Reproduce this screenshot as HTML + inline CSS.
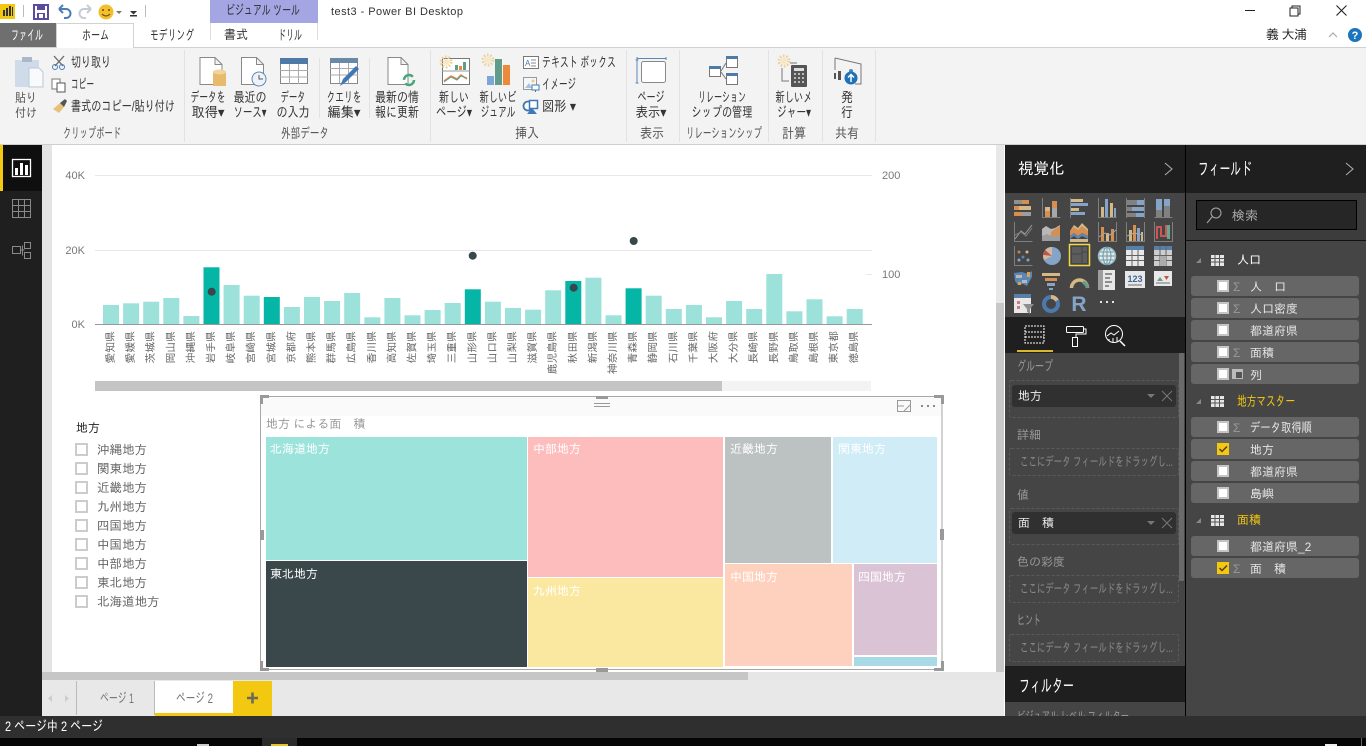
<!DOCTYPE html>
<html><head><meta charset="utf-8"><title>test3 - Power BI Desktop</title>
<style>
html,body{margin:0;padding:0;width:1366px;height:746px;overflow:hidden;background:#fff}
svg{display:block}
text{font-family:"Liberation Sans","IPAGothic","Noto Sans CJK JP",sans-serif;font-size:12px;fill:#444}
.c{text-anchor:middle}
.r{fill:#333;font-size:12.5px}
.g{fill:#555;font-size:12.5px}
.w{fill:#fff}
.lb{font-size:10.800px;fill:#666;text-anchor:end}
.ax{font-size:11px;fill:#777}
.sl{font-size:12.500px;fill:#666}
.f{font-size:12px;fill:#e6e6e6}
.h{font-size:12.500px;fill:#f2c811}
.wl{font-size:12px;fill:#999}
.dr{font-size:13px;fill:#8a8a8a}
.tm{font-size:12px;fill:#fff}
.k{font-size:14px}
</style></head><body>
<svg width="1366" height="746" viewBox="0 0 1366 746" xmlns="http://www.w3.org/2000/svg">
<!-- base -->
<rect width="1366" height="746" fill="#fff"/>
<!-- ribbon -->
<rect x="0" y="47" width="1366" height="97" fill="#f3f3f3"/>
<rect x="0" y="47" width="1366" height="1" fill="#d2d2d2"/>
<rect x="0" y="144" width="1366" height="1" fill="#cfcfcf"/>
<!-- title bar -->
<rect x="0" y="4" width="15" height="15" fill="#f2c811"/>
<rect x="3" y="10" width="2" height="6" fill="#333"/><rect x="6" y="8" width="2" height="8" fill="#333"/><rect x="9" y="6" width="2" height="10" fill="#333"/><rect x="12" y="7" width="1" height="9" fill="#333"/>
<rect x="23" y="5" width="1" height="12" fill="#bbb"/>
<rect x="34" y="5" width="14" height="14" fill="none" stroke="#5c4a9e" stroke-width="2"/><rect x="37" y="5" width="8" height="5" fill="#5c4a9e"/><rect x="37" y="13" width="8" height="6" fill="#5c4a9e"/><rect x="39" y="14" width="4" height="4" fill="#fff"/>
<path d="M59 9l4-4M59 9l4 4M59 9h7a4.500 4.500 0 0 1 0 9h-2" fill="none" stroke="#4a7db8" stroke-width="2"/>
<path d="M91 9l-4-4M91 9l-4 4M91 9h-7a4.500 4.500 0 0 0 0 9h2" fill="none" stroke="#c4ccd6" stroke-width="2"/>
<circle cx="106" cy="12" r="7.500" fill="#f2c02a"/><circle cx="103" cy="10" r="1" fill="#6b4a10"/><circle cx="109" cy="10" r="1" fill="#6b4a10"/><path d="M102 14q4 4 8 0" fill="none" stroke="#6b4a10"/>
<path d="M116 11h6l-3 3z" fill="#777"/>
<path d="M130 11h7l-3.500 3.500z M130 15h7v1.500h-7z" fill="#333"/>
<rect x="145" y="5" width="1" height="12" fill="#bbb"/>
<rect x="210" y="0" width="108" height="23" fill="#a3a6e2"/>
<rect x="210" y="23" width="1" height="17" fill="#ddd"/><rect x="317" y="23" width="1" height="17" fill="#ddd"/>
<text x="226" y="15" textLength="74" lengthAdjust="spacingAndGlyphs" class="k" style="fill:#333">ビジュアル ツール</text>
<text x="331" y="15" textLength="132" lengthAdjust="spacing" style="fill:#333;font-size:11px">test3 - Power BI Desktop</text>
<!-- window controls -->
<rect x="1245" y="10" width="10" height="1" fill="#222"/>
<rect x="1290" y="8" width="8" height="8" fill="none" stroke="#222"/><path d="M1292 8V6h8v8h-2" fill="none" stroke="#222"/>
<path d="M1336.500 5.500l10 10M1346.500 5.500l-10 10" stroke="#222" stroke-width="1.100"/>
<text x="1266" y="39" textLength="41" lengthAdjust="spacing" style="fill:#222;font-size:13px">義 大浦</text>
<path d="M1329 37l4-4 4 4" fill="none" stroke="#aaa" stroke-width="1.200"/>
<circle cx="1355" cy="35" r="7" fill="#1c75bc"/><text x="1355" y="39" class="c w" style="font-size:11px;font-weight:bold">?</text>
<!-- tabs -->
<rect x="0" y="23" width="56" height="24" fill="#6f6f6f"/>
<text x="11" y="40" textLength="32" lengthAdjust="spacingAndGlyphs" class="w k">ファイル</text>
<rect x="57" y="23" width="76" height="25" fill="#fff"/><path d="M56.500 48V23.500H133.500V48" fill="none" stroke="#d2d2d2"/>
<text x="82" y="40" textLength="27" lengthAdjust="spacingAndGlyphs" class="k" style="fill:#333">ホーム</text>
<text x="150" y="40" textLength="44" lengthAdjust="spacingAndGlyphs" class="k" style="fill:#333">モデリング</text>
<text x="224" y="39" textLength="24" lengthAdjust="spacingAndGlyphs" style="fill:#333;font-size:13px">書式</text>
<text x="278" y="40" textLength="24" lengthAdjust="spacingAndGlyphs" class="k" style="fill:#333">ドリル</text>
<!-- ribbon separators -->
<g fill="#e2e2e2"><rect x="184" y="50" width="1" height="92"/><rect x="430" y="50" width="1" height="92"/><rect x="626" y="50" width="1" height="92"/><rect x="679" y="50" width="1" height="92"/><rect x="768" y="50" width="1" height="92"/><rect x="822" y="50" width="1" height="92"/><rect x="875" y="50" width="1" height="92"/><rect x="319" y="58" width="1" height="60"/><rect x="369" y="58" width="1" height="60"/></g>
<!-- ribbon: clipboard -->
<rect x="15" y="60" width="24" height="27" fill="#cfdbe9"/><rect x="22" y="57" width="10" height="5" fill="#aab8c8"/><path d="M29 68h10l4 4v15H29z" fill="#f8fafc" stroke="#b9c8da"/>
<text x="26" y="102" class="c g" textLength="22" lengthAdjust="spacingAndGlyphs">貼り</text><text x="26" y="117" class="c g" textLength="22" lengthAdjust="spacingAndGlyphs">付け</text>
<path d="M54 56l9 10M64 56l-9 10" stroke="#666" stroke-width="1.300"/><circle cx="55" cy="67" r="2.500" fill="none" stroke="#4a7db8"/><circle cx="62" cy="67" r="2.500" fill="none" stroke="#4a7db8"/>
<text x="71" y="67" textLength="40" lengthAdjust="spacingAndGlyphs" class="r k">切り取り</text>
<rect x="52" y="79" width="8" height="10" fill="#fff" stroke="#777"/><rect x="57" y="83" width="8" height="9" fill="#fff" stroke="#555"/>
<text x="71" y="89" textLength="23" lengthAdjust="spacingAndGlyphs" class="r k">コピー</text>
<path d="M53 109l7-6 4 4-5 6z" fill="#e6c17a"/><path d="M60 103l5-4 2 2-3 6z" fill="#555"/>
<text x="71" y="111" textLength="104" lengthAdjust="spacingAndGlyphs" class="r k">書式のコピー/貼り付け</text>
<text x="92" y="138" class="c g k" textLength="58" lengthAdjust="spacingAndGlyphs">クリップボード</text>
<!-- data -->
<path d="M200 57.500h15l7 7v20h-22z M215 57.500v7h7" fill="#fff" stroke="#888"/>
<rect x="213" y="72" width="13" height="14" fill="#e6bb6e"/><ellipse cx="219.500" cy="72" rx="6.500" ry="2.500" fill="#f1d49a"/>
<text x="208" y="102" class="c r k" textLength="35" lengthAdjust="spacingAndGlyphs">データを</text><text x="208" y="117" class="c r k" textLength="33" lengthAdjust="spacingAndGlyphs">取得▾</text>
<path d="M241.500 57.500h15l7 7v20h-22z M256.500 57.500v7h7" fill="#fff" stroke="#888"/>
<circle cx="259" cy="79" r="7" fill="#eef3f9" stroke="#5b87b5"/><path d="M259 75v4h4" fill="none" stroke="#555"/>
<text x="250" y="102" class="c r k" textLength="33" lengthAdjust="spacingAndGlyphs">最近の</text><text x="250" y="117" class="c r k" textLength="33" lengthAdjust="spacingAndGlyphs">ソース▾</text>
<rect x="280.500" y="58.500" width="27" height="25" fill="#fff" stroke="#888"/><rect x="280" y="58" width="28" height="6" fill="#4f7aa8"/><path d="M280 70.500h28M280 77h28M289.500 64v20M298.500 64v20" stroke="#aaa"/>
<text x="293" y="102" class="c r k" textLength="25" lengthAdjust="spacingAndGlyphs">データ</text><text x="293" y="117" class="c r k" textLength="33" lengthAdjust="spacingAndGlyphs">の入力</text>
<rect x="330.500" y="58.500" width="27" height="25" fill="#fff" stroke="#888"/><rect x="330" y="58" width="28" height="5" fill="#6a88a8"/><path d="M330 68.500h28M330 75h28M339.500 63v20M348.500 63v20" stroke="#aaa"/>
<path d="M340 86l3-7 13-13 3 3-13 13z" fill="#3f78b5"/>
<text x="344" y="102" class="c r k" textLength="35" lengthAdjust="spacingAndGlyphs">クエリを</text><text x="344" y="117" class="c r k" textLength="33" lengthAdjust="spacingAndGlyphs">編集▾</text>
<path d="M388 57.500h13l7 7v20h-20z M401 57.500v7h7" fill="#fff" stroke="#888"/>
<circle cx="409" cy="80" r="5" fill="none" stroke="#4aa77b" stroke-width="2.500" stroke-dasharray="12 3.700"/>
<text x="397" y="102" class="c r k" textLength="44" lengthAdjust="spacingAndGlyphs">最新の情</text><text x="397" y="117" class="c r k" textLength="44" lengthAdjust="spacingAndGlyphs">報に更新</text>
<text x="305" y="138" class="c g k" textLength="48" lengthAdjust="spacingAndGlyphs">外部データ</text>
<!-- insert -->
<rect x="442.500" y="58.500" width="27" height="26" fill="#fff" stroke="#777"/><path d="M442 71h28" stroke="#999"/>
<circle cx="446" cy="62" r="3" fill="#f6e7c6"/><circle cx="446" cy="62" r="5" fill="none" stroke="#eed39a" stroke-width="3" stroke-dasharray="1.600 1.600"/><rect x="455" y="65" width="3" height="5" fill="#5f9d8a"/><rect x="459" y="66" width="3" height="4" fill="#e8894a"/><rect x="463" y="62" width="3" height="8" fill="#5f9d8a"/>
<path d="M444 81l7-5 6 3 4-4 6 4" fill="none" stroke="#e8894a" stroke-width="1.600"/><path d="M444 82l7-5 6 3 4-4 6 2" fill="none" stroke="#5f9d8a" stroke-width="1"/>
<text x="454" y="102" class="c r k" textLength="30" lengthAdjust="spacingAndGlyphs">新しい</text><text x="454" y="117" class="c r k" textLength="36" lengthAdjust="spacingAndGlyphs">ページ▾</text>
<circle cx="488" cy="60" r="3" fill="#f6e7c6"/><circle cx="488" cy="60" r="5" fill="none" stroke="#eed39a" stroke-width="3" stroke-dasharray="1.600 1.600"/><rect x="487" y="76" width="7" height="9" fill="#7aa6d8"/><rect x="495" y="59" width="7" height="26" fill="#5f9d8a"/><rect x="503" y="65" width="7" height="20" fill="#ec8a3c"/>
<text x="498" y="102" class="c r k" textLength="37" lengthAdjust="spacingAndGlyphs">新しいビ</text><text x="498" y="117" class="c r k" textLength="35" lengthAdjust="spacingAndGlyphs">ジュアル</text>
<rect x="523.500" y="56.500" width="15" height="12" fill="#fff" stroke="#777"/><text x="525" y="66" style="font-size:8px;fill:#3f78b5">A</text><path d="M531 60h5M531 63h5M531 66h5" stroke="#888"/>
<text x="542" y="67" textLength="74" lengthAdjust="spacingAndGlyphs" class="r k">テキスト ボックス</text>
<rect x="523.500" y="77.500" width="13" height="12" fill="#f4f7fa" stroke="#999"/><path d="M525 88l4-5 3 5z" fill="#a8c2dc"/><circle cx="533" cy="81" r="1.500" fill="#eecb8a"/><rect x="532" y="85" width="7" height="5" fill="#fff" stroke="#3f78b5"/><path d="M535.500 90v2" stroke="#3f78b5"/>
<text x="542" y="89" textLength="34" lengthAdjust="spacingAndGlyphs" class="r k">イメージ</text>
<circle cx="528" cy="106" r="4.500" fill="#fff" stroke="#3f78b5" stroke-width="1.800"/><rect x="529.500" y="100.500" width="8" height="8" fill="#fff" stroke="#3f78b5" stroke-width="1.500"/><path d="M527 114l5-6 5 6z" fill="#3f78b5"/>
<text x="542" y="111" class="r k" textLength="34" lengthAdjust="spacingAndGlyphs">図形 ▾</text>
<text x="527" y="138" class="c g k" textLength="24" lengthAdjust="spacingAndGlyphs">挿入</text>
<!-- view -->
<path d="M637 58.500h29M637 57v3M666 57v3M637 60v23M635.500 60h3M635.500 83h3" fill="none" stroke="#5b87b5"/><rect x="641.500" y="61.500" width="24" height="21" rx="2" fill="#fff" stroke="#888"/>
<text x="651" y="102" class="c r k" textLength="27" lengthAdjust="spacingAndGlyphs">ページ</text><text x="651" y="117" class="c r k" textLength="31" lengthAdjust="spacingAndGlyphs">表示▾</text>
<text x="652" y="138" class="c g k" textLength="24" lengthAdjust="spacingAndGlyphs">表示</text>
<!-- relationships -->
<g fill="#fff" stroke="#777"><rect x="709.500" y="66.500" width="11" height="10"/><rect x="726.500" y="56.500" width="11" height="11"/><rect x="726.500" y="74.500" width="11" height="10"/></g>
<rect x="709" y="66" width="12" height="3" fill="#4f7aa8"/><rect x="726" y="56" width="12" height="3" fill="#4f7aa8"/><rect x="726" y="73" width="12" height="3" fill="#4f7aa8"/>
<path d="M721 71l5-8M721 72l5 7" stroke="#777" fill="none"/>
<text x="722" y="102" class="c r k" textLength="48" lengthAdjust="spacingAndGlyphs">リレーション</text><text x="722" y="117" class="c r k" textLength="61" lengthAdjust="spacingAndGlyphs">シップの管理</text>
<text x="724" y="138" class="c g k" textLength="76" lengthAdjust="spacingAndGlyphs">リレーションシップ</text>
<!-- measure -->
<circle cx="784" cy="61" r="3" fill="#f6e7c6"/><circle cx="784" cy="61" r="5" fill="none" stroke="#eed39a" stroke-width="3" stroke-dasharray="1.600 1.600"/><path d="M782 68v13h7M790 63h7" fill="none" stroke="#777"/>
<rect x="791" y="65" width="16" height="22" rx="1" fill="#555"/><rect x="794" y="68" width="10" height="3" fill="#ddd"/><path d="M794 74h10M794 78h10M794 82h10" stroke="#bbb" stroke-width="2" stroke-dasharray="2 2"/>
<text x="794" y="102" class="c r k" textLength="37" lengthAdjust="spacingAndGlyphs">新しいメ</text><text x="794" y="117" class="c r k" textLength="34" lengthAdjust="spacingAndGlyphs">ジャー▾</text>
<text x="794" y="138" class="c g k" textLength="24" lengthAdjust="spacingAndGlyphs">計算</text>
<!-- publish -->
<path d="M835 58l26 6v20h-6" fill="none" stroke="#777"/><path d="M835 58v12" stroke="#777"/>
<rect x="834" y="73" width="2" height="6" fill="#555"/><rect x="838" y="71" width="3" height="9" fill="#555"/>
<circle cx="851" cy="71" r="2" fill="#4f87bd"/><circle cx="851" cy="78" r="6.500" fill="#1f72b8"/><path d="M851 82v-7M848 77.500l3-3 3 3" fill="none" stroke="#fff" stroke-width="1.500"/>
<text x="847" y="102" class="c r k" textLength="12" lengthAdjust="spacingAndGlyphs">発</text><text x="847" y="117" class="c r k" textLength="12" lengthAdjust="spacingAndGlyphs">行</text>
<text x="847" y="138" class="c g k" textLength="24" lengthAdjust="spacingAndGlyphs">共有</text>

<!-- left nav -->
<rect x="0" y="145" width="42" height="571" fill="#1f1f1f"/>
<rect x="0" y="145" width="3" height="46" fill="#f2c811"/><rect x="3" y="145" width="39" height="46" fill="#0f0f0f"/>
<rect x="12.500" y="159.500" width="18" height="17" fill="none" stroke="#fff" stroke-width="1.300"/><rect x="15" y="168" width="3" height="7" fill="#fff"/><rect x="20" y="163" width="3" height="12" fill="#fff"/><rect x="25" y="165" width="3" height="10" fill="#fff"/>
<g stroke="#8a8a8a" fill="none"><rect x="12.500" y="199.500" width="18" height="18"/><path d="M12 205.500h19M12 211.500h19M18.500 199v19M24.500 199v19"/>
<rect x="12.500" y="246.500" width="8" height="7"/><rect x="24.500" y="242.500" width="6" height="6"/><rect x="24.500" y="252.500" width="6" height="6"/><path d="M20.500 250h4M22.500 245.500v10"/></g>
<!-- canvas -->
<rect x="42" y="145" width="10" height="527" fill="#e4e4e4"/>
<rect x="996" y="145" width="8" height="158" fill="#e8e8e8"/><rect x="996" y="303" width="8" height="369" fill="#c8c8c8"/>
<rect x="42" y="672" width="962" height="8" fill="#e6e6e6"/><rect x="42" y="672" width="706" height="8" fill="#c6c6c6"/>

<!-- chart -->
<g fill="#e8e8e8"><rect x="95" y="175" width="777" height="1"/><rect x="95" y="250" width="777" height="1"/><rect x="866" y="274" width="6" height="1"/></g>
<text x="85" y="179" class="ax" text-anchor="end">40K</text><text x="85" y="254" class="ax" text-anchor="end">20K</text><text x="85" y="328" class="ax" text-anchor="end">0K</text>
<text x="882" y="179" class="ax">200</text><text x="882" y="278" class="ax">100</text>
<g fill="#9ce1da">
<rect x="103" y="305" width="16" height="19.300"/><rect x="123.100" y="303.300" width="16" height="21"/><rect x="143.200" y="301.700" width="16" height="22.600"/><rect x="163.300" y="298" width="16" height="26.300"/><rect x="183.400" y="316" width="16" height="8.300"/>
<rect x="203.500" y="267.300" width="16" height="57" fill="#05b5a6"/><rect x="223.600" y="285" width="16" height="39.300"/><rect x="243.700" y="295.700" width="16" height="28.600"/><rect x="263.800" y="297" width="16" height="27.300" fill="#05b5a6"/><rect x="283.900" y="307" width="16" height="17.300"/>
<rect x="304" y="297" width="16" height="27.300"/><rect x="324.100" y="301" width="16" height="23.300"/><rect x="344.200" y="293" width="16" height="31.300"/><rect x="364.300" y="317.300" width="16" height="7"/><rect x="384.400" y="298" width="16" height="26.300"/>
<rect x="404.500" y="315.300" width="16" height="9"/><rect x="424.600" y="310" width="16" height="14.300"/><rect x="444.700" y="303" width="16" height="21.300"/><rect x="464.800" y="289.300" width="16" height="35" fill="#05b5a6"/><rect x="484.900" y="301.700" width="16" height="22.600"/>
<rect x="505" y="308" width="16" height="16.300"/><rect x="525.100" y="309.700" width="16" height="14.600"/><rect x="545.200" y="290.300" width="16" height="34"/><rect x="565.300" y="281" width="16" height="43.300" fill="#05b5a6"/><rect x="585.400" y="277.700" width="16" height="46.600"/>
<rect x="605.500" y="315.300" width="16" height="9"/><rect x="625.600" y="288.300" width="16" height="36" fill="#05b5a6"/><rect x="645.700" y="295.700" width="16" height="28.600"/><rect x="665.800" y="309" width="16" height="15.300"/><rect x="685.900" y="305" width="16" height="19.300"/>
<rect x="706" y="317.300" width="16" height="7"/><rect x="726.100" y="301" width="16" height="23.300"/><rect x="746.200" y="309" width="16" height="15.300"/><rect x="766.300" y="274" width="16" height="50.300"/><rect x="786.400" y="311.300" width="16" height="13"/>
<rect x="806.500" y="299.300" width="16" height="25"/><rect x="826.600" y="316.300" width="16" height="8"/><rect x="846.700" y="309" width="16" height="15.300"/>
</g>
<rect x="95" y="324" width="777" height="1" fill="#999"/>
<g fill="#37474b"><circle cx="211.700" cy="291.700" r="4"/><circle cx="472.700" cy="255.700" r="4"/><circle cx="573.700" cy="287.700" r="4"/><circle cx="633.700" cy="241" r="4"/></g>
<g>
<text class="lb" transform="translate(114,331) rotate(-90)">愛知県</text>
<text class="lb" transform="translate(134.100,331) rotate(-90)">愛媛県</text>
<text class="lb" transform="translate(154.200,331) rotate(-90)">茨城県</text>
<text class="lb" transform="translate(174.300,331) rotate(-90)">岡山県</text>
<text class="lb" transform="translate(194.400,331) rotate(-90)">沖縄県</text>
<text class="lb" transform="translate(214.500,331) rotate(-90)">岩手県</text>
<text class="lb" transform="translate(234.600,331) rotate(-90)">岐阜県</text>
<text class="lb" transform="translate(254.700,331) rotate(-90)">宮崎県</text>
<text class="lb" transform="translate(274.800,331) rotate(-90)">宮城県</text>
<text class="lb" transform="translate(294.900,331) rotate(-90)">京都府</text>
<text class="lb" transform="translate(315,331) rotate(-90)">熊本県</text>
<text class="lb" transform="translate(335.100,331) rotate(-90)">群馬県</text>
<text class="lb" transform="translate(355.200,331) rotate(-90)">広島県</text>
<text class="lb" transform="translate(375.300,331) rotate(-90)">香川県</text>
<text class="lb" transform="translate(395.400,331) rotate(-90)">高知県</text>
<text class="lb" transform="translate(415.500,331) rotate(-90)">佐賀県</text>
<text class="lb" transform="translate(435.600,331) rotate(-90)">埼玉県</text>
<text class="lb" transform="translate(455.700,331) rotate(-90)">三重県</text>
<text class="lb" transform="translate(475.800,331) rotate(-90)">山形県</text>
<text class="lb" transform="translate(495.900,331) rotate(-90)">山口県</text>
<text class="lb" transform="translate(516,331) rotate(-90)">山梨県</text>
<text class="lb" transform="translate(536.100,331) rotate(-90)">滋賀県</text>
<text class="lb" transform="translate(556.200,331) rotate(-90)">鹿児島県</text>
<text class="lb" transform="translate(576.300,331) rotate(-90)">秋田県</text>
<text class="lb" transform="translate(596.400,331) rotate(-90)">新潟県</text>
<text class="lb" transform="translate(616.500,331) rotate(-90)">神奈川県</text>
<text class="lb" transform="translate(636.600,331) rotate(-90)">青森県</text>
<text class="lb" transform="translate(656.700,331) rotate(-90)">静岡県</text>
<text class="lb" transform="translate(676.800,331) rotate(-90)">石川県</text>
<text class="lb" transform="translate(696.900,331) rotate(-90)">千葉県</text>
<text class="lb" transform="translate(717,331) rotate(-90)">大阪府</text>
<text class="lb" transform="translate(737.100,331) rotate(-90)">大分県</text>
<text class="lb" transform="translate(757.200,331) rotate(-90)">長崎県</text>
<text class="lb" transform="translate(777.300,331) rotate(-90)">長野県</text>
<text class="lb" transform="translate(797.400,331) rotate(-90)">鳥取県</text>
<text class="lb" transform="translate(817.500,331) rotate(-90)">島根県</text>
<text class="lb" transform="translate(837.600,331) rotate(-90)">東京都</text>
<text class="lb" transform="translate(857.700,331) rotate(-90)">徳島県</text>
</g>
<rect x="95" y="381" width="627" height="10" fill="#c4c4c4"/><rect x="722" y="381" width="149" height="10" fill="#f3f3f3"/>

<!-- slicer -->
<text x="76" y="432" style="font-size:12px;fill:#222">地方</text>
<g fill="#fff" stroke="#ccc" stroke-width="2">
<rect x="76" y="444" width="11" height="11"/><rect x="76" y="463" width="11" height="11"/><rect x="76" y="482" width="11" height="11"/><rect x="76" y="501" width="11" height="11"/><rect x="76" y="520" width="11" height="11"/><rect x="76" y="539" width="11" height="11"/><rect x="76" y="558" width="11" height="11"/><rect x="76" y="577" width="11" height="11"/><rect x="76" y="596" width="11" height="11"/>
</g>
<text x="97" y="454" class="sl">沖縄地方</text><text x="97" y="473" class="sl">関東地方</text><text x="97" y="492" class="sl">近畿地方</text><text x="97" y="511" class="sl">九州地方</text><text x="97" y="530" class="sl">四国地方</text><text x="97" y="549" class="sl">中国地方</text><text x="97" y="568" class="sl">中部地方</text><text x="97" y="587" class="sl">東北地方</text><text x="97" y="606" class="sl">北海道地方</text>

<!-- treemap visual -->
<rect x="261" y="397" width="681" height="19" fill="#fafafa"/>
<rect x="260.500" y="396.500" width="681.500" height="273" fill="none" stroke="#a6a6a6"/>
<text x="266" y="428" style="font-size:12px;fill:#999">地方 による面　積</text>
<rect x="266" y="437" width="261" height="123" fill="#9ce3dc"/>
<rect x="266" y="561" width="261" height="106" fill="#3a474b"/>
<rect x="528" y="437" width="195" height="140" fill="#fdbdbd"/>
<rect x="528" y="578" width="195" height="89" fill="#fbe8a0"/>
<rect x="725" y="437" width="106" height="126" fill="#bcc1c1"/>
<rect x="833" y="437" width="104" height="126" fill="#cfecf7"/>
<rect x="725" y="564" width="127" height="102" fill="#fdd1bd"/>
<rect x="854" y="564" width="83" height="91" fill="#dbc3d6"/>
<rect x="854" y="657" width="83" height="9" fill="#a9d9e5"/>
<text x="270" y="453" class="tm">北海道地方</text><text x="270" y="578" class="tm">東北地方</text><text x="533" y="453" class="tm">中部地方</text><text x="533" y="595" class="tm">九州地方</text><text x="730" y="453" class="tm">近畿地方</text><text x="838" y="453" class="tm">関東地方</text><text x="730" y="581" class="tm">中国地方</text><text x="858" y="581" class="tm">四国地方</text>
<!-- handles -->
<g fill="#999"><rect x="596" y="396" width="12" height="3"/><rect x="260" y="530" width="4" height="10"/><rect x="940" y="529" width="4" height="11"/><rect x="596" y="668" width="12" height="4"/>
<path d="M260 395h9v3h-6v6h-3z"/><path d="M934 395h10v9h-3v-6h-7z"/><path d="M260 661h3v7h6v3h-9z"/><path d="M941 661h3v10h-10v-3h7z"/></g>
<path d="M594 403.500h16M594 406.500h16" stroke="#999"/>
<rect x="897.500" y="400.500" width="13" height="11" fill="none" stroke="#999"/><path d="M904 411l6-6M904 406h-6" stroke="#999" fill="none"/>
<g fill="#888"><rect x="921" y="405" width="2" height="2"/><rect x="927" y="405" width="2" height="2"/><rect x="933" y="405" width="2" height="2"/></g>

<!-- page tabs -->
<rect x="42" y="680" width="962" height="36" fill="#e8e8e8"/>
<path d="M52 695l-4 3.500 4 3.500z" fill="#ccc"/><path d="M65 695l4 3.500-4 3.500z" fill="#ccc"/>
<rect x="76" y="681" width="1" height="34" fill="#bbb"/><rect x="154" y="681" width="1" height="34" fill="#bbb"/>
<text x="100" y="703" textLength="34" lengthAdjust="spacingAndGlyphs" class="k" style="fill:#777">ページ 1</text>
<rect x="155" y="681" width="78" height="34" fill="#fff"/><rect x="155" y="713" width="78" height="3" fill="#f2c811"/>
<text x="176" y="703" textLength="37" lengthAdjust="spacingAndGlyphs" class="k" style="fill:#777">ページ 2</text>
<rect x="233" y="681" width="39" height="35" fill="#f2c811"/><path d="M247 698h11M252.500 692.500v11" stroke="#6b6b5a" stroke-width="2.600"/>

<!-- viz pane -->
<rect x="1005" y="145" width="180" height="571" fill="#454545"/>
<rect x="1005" y="145" width="180" height="48" fill="#1f1f1f"/>
<text x="1018" y="174" style="font-size:15.500px;fill:#fff">視覚化</text>
<path d="M1165 163l7 6-7 6" fill="none" stroke="#aaa" stroke-width="1.100"/>
<rect x="1005" y="317" width="180" height="36" fill="#1f1f1f"/>
<g opacity=".88">
<!-- gallery row 1 -->
<g transform="translate(1014,198)"><rect x="0" y="2" width="8" height="4" fill="#9a9a9a"/><rect x="8" y="2" width="7" height="4" fill="#ea9a52"/><rect x="0" y="8" width="5" height="4" fill="#ea9a52"/><rect x="5" y="8" width="12" height="4" fill="#e8c88f"/><rect x="0" y="14" width="8" height="4" fill="#ea9a52"/><rect x="8" y="14" width="9" height="4" fill="#aaa"/></g>
<g transform="translate(1042,198)"><path d="M.5 0v19.500h18" fill="none" stroke="#888"/><rect x="3" y="9" width="5" height="4" fill="#e8c88f"/><rect x="3" y="13" width="5" height="6" fill="#ea9a52"/><rect x="10" y="3" width="5" height="7" fill="#ea9a52"/><rect x="10" y="10" width="5" height="9" fill="#b5b5b5"/></g>
<g transform="translate(1070,198)"><path d="M.5 0v20" stroke="#888"/><rect x="1" y="1" width="12" height="3" fill="#e8c88f"/><rect x="1" y="5" width="17" height="3" fill="#8eb2da"/><rect x="1" y="10" width="8" height="3" fill="#e8c88f"/><rect x="1" y="14" width="14" height="3" fill="#8eb2da"/></g>
<g transform="translate(1098,198)"><path d="M.5 0v19.500h18" fill="none" stroke="#888"/><rect x="3" y="9" width="3" height="10" fill="#e8c88f"/><rect x="7" y="1" width="3" height="18" fill="#8eb2da"/><rect x="12" y="5" width="3" height="14" fill="#e8c88f"/><rect x="16" y="10" width="2" height="9" fill="#8eb2da"/></g>
<g transform="translate(1126,198)"><path d="M.5 0v20M18.500 0v20" stroke="#888"/><rect x="1" y="2" width="10" height="5" fill="#8a8a8a"/><rect x="11" y="2" width="7" height="5" fill="#8eb2da"/><rect x="1" y="9" width="5" height="4" fill="#8a8a8a"/><rect x="6" y="9" width="12" height="4" fill="#8eb2da"/><rect x="1" y="15" width="9" height="4" fill="#8a8a8a"/><rect x="10" y="15" width="8" height="4" fill="#8eb2da"/></g>
<g transform="translate(1154,198)"><path d="M.5 19.500h18" stroke="#888"/><rect x="2" y="1" width="6" height="11" fill="#8eb2da"/><rect x="2" y="12" width="6" height="7" fill="#8a8a8a"/><rect x="10" y="1" width="6" height="7" fill="#8eb2da"/><rect x="10" y="8" width="6" height="11" fill="#8a8a8a"/></g>
<!-- row 2 -->
<g transform="translate(1014,222)"><path d="M.5 0v19.500h18" fill="none" stroke="#888"/><path d="M1 17l6-8 4 3 7-9" fill="none" stroke="#aaa"/><path d="M1 13l6-3 5 4 6-8" fill="none" stroke="#888"/></g>
<g transform="translate(1042,222)"><path d="M0 19V7l4-3 5 3 4-1 5-3v16z" fill="#c8c8c8"/><path d="M9 10l4-3 5-3v10l-9 0z" fill="#ea9a52"/><path d="M0 14l5-2 5 2 8-1v6H0z" fill="#aaa"/></g>
<g transform="translate(1070,222)"><path d="M0 9l4-6 4 3 4-5 6 6v4H0z" fill="#e8c88f"/><path d="M0 9l4-4 4 3 4-4 6 5v5l-6-3-4 3-4-3-4 3z" fill="#ea9a52"/><path d="M0 14l4-3 4 3 4-3 6 3v3l-6-3-4 3-4-3-4 3z" fill="#5f8fc6"/><rect x="0" y="17" width="18" height="3" fill="#e8c88f"/></g>
<g transform="translate(1098,222)"><path d="M.5 0v19.500h18V0" fill="none" stroke="#888"/><rect x="3" y="5" width="3" height="14" fill="#ea9a52"/><rect x="8" y="11" width="3" height="8" fill="#e8c88f"/><rect x="13" y="7" width="3" height="12" fill="#ea9a52"/><path d="M1 15l6-4 5 2 6-5" fill="none" stroke="#b5b5b5"/></g>
<g transform="translate(1126,222)"><path d="M.5 0v19.500h18V0" fill="none" stroke="#888"/><rect x="3" y="8" width="3" height="11" fill="#e8c88f"/><rect x="7" y="3" width="3" height="16" fill="#ea9a52"/><rect x="11" y="6" width="3" height="13" fill="#8eb2da"/><rect x="15" y="10" width="2" height="9" fill="#e8c88f"/><path d="M1 14l7-3 9 2" fill="none" stroke="#bbb"/></g>
<g transform="translate(1154,222)"><path d="M.5 0v19.500h18V0" fill="none" stroke="#888"/><path d="M3 17V5h4v9h5V3" fill="none" stroke="#e05a5a" stroke-width="2"/><rect x="13" y="3" width="3" height="14" fill="#6fb59c"/></g>
<!-- row 3 -->
<g transform="translate(1014,246)"><path d="M.5 0v19.500h18" fill="none" stroke="#888"/><circle cx="5" cy="6" r="1.500" fill="#d48a5a"/><circle cx="9" cy="11" r="1.500" fill="#5f8fc6"/><circle cx="13" cy="6" r="1.500" fill="#e8c88f"/><circle cx="5" cy="14" r="1.500" fill="#8eb2da"/><circle cx="14" cy="14" r="1.500" fill="#8eb2da"/></g>
<g transform="translate(1042,246)"><circle cx="10" cy="10" r="9" fill="#8eb2da"/><path d="M10 10L3 4a9 9 0 0 1 7-3z" fill="#e8c8ae"/><path d="M10 10L1 9a9 9 0 0 1 2-5z" fill="#d05a4a"/><path d="M10 10L2 14a9 9 0 0 1-1-5z" fill="#e8c8ae"/></g>
<g transform="translate(1098,246)"><circle cx="9" cy="10" r="8.500" fill="#fff" stroke="#9ccdd9" stroke-width="1.500"/><path d="M1 10h16M2.500 6h13M2.500 14h13M9 2v16" stroke="#6aa5b8"/><ellipse cx="9" cy="10" rx="4" ry="8.500" fill="none" stroke="#6aa5b8"/></g>
<g transform="translate(1126,246)"><rect x="0" y="0" width="18" height="20" fill="#fff"/><rect x="0" y="0" width="18" height="4" fill="#5b87b5"/><path d="M0 9.500h18M0 14.500h18M6 4v16M12 4v16" stroke="#666"/></g>
<g transform="translate(1154,246)"><rect x="0" y="0" width="18" height="20" fill="#e0e0e0"/><rect x="0" y="0" width="18" height="4" fill="#5b87b5"/><path d="M0 9.500h18M0 14.500h18M6 0v20M12 0v20" stroke="#666"/><rect x="6" y="10" width="6" height="10" fill="#bbb"/></g>
<!-- row 4 -->
<g transform="translate(1014,270)"><path d="M0 3l8-1 6 2 4-3v6l-3 5-2 4-4-2-5 1-3-4z" fill="#5f8fc6"/><path d="M2 5h6v3H2zM8 10h5v3H8z" fill="#c8c8c8"/><path d="M13 2h3v5h-3zM4 12h3v3H4z" fill="#e8b45a"/></g>
<g transform="translate(1042,270)"><rect x="0" y="3" width="18" height="3" fill="#e8c88f"/><rect x="3" y="8" width="12" height="3" fill="#ea9a52"/><rect x="5" y="13" width="8" height="3" fill="#8eb2da"/><rect x="7" y="18" width="4" height="2" fill="#8eb2da"/></g>
<g transform="translate(1070,270)"><path d="M1.500 18a8 8 0 0 1 16 0" fill="none" stroke="#e8c88f" stroke-width="3.500"/><path d="M13 12a8 8 0 0 1 4.500 6" fill="none" stroke="#6fa88f" stroke-width="3.500"/></g>
<g transform="translate(1098,270)"><rect x="0" y="0" width="17" height="20" fill="#fff"/><rect x="0" y="0" width="5" height="20" fill="#aaa"/><path d="M7 4h7M7 8h5M7 12h7M7 16h4" stroke="#777" stroke-width="1.500"/></g>
<g transform="translate(1125,271)"><rect x="0" y="0" width="20" height="17" fill="#fff"/><text x="10" y="11" class="c" style="font-size:9px;fill:#3f6e9e;font-weight:bold">123</text><path d="M3 14h14" stroke="#777"/></g>
<g transform="translate(1154,271)"><rect x="0" y="0" width="18" height="15" fill="#fff"/><path d="M3 10l3-4 3 4z" fill="#6fa88f"/><path d="M10 5h5l-2.500 4z" fill="#d05a4a"/><path d="M2 12h14" stroke="#777"/></g>
<!-- row 5 -->
<g transform="translate(1014,294)"><rect x="0" y="0" width="17" height="19" fill="#fff"/><rect x="0" y="0" width="17" height="4" fill="#5b87b5"/><rect x="3" y="7" width="3" height="3" fill="#d88"/><rect x="3" y="12" width="3" height="3" fill="#d88"/><path d="M9 10h11l-4 5v5l-3-2v-3z" fill="#999"/></g>
<g transform="translate(1042,294)"><circle cx="9" cy="10" r="7" fill="none" stroke="#4f82bd" stroke-width="4"/><path d="M9 3a7 7 0 0 1 6 3.500" fill="none" stroke="#e8c88f" stroke-width="4"/></g>
<text x="1079" y="311" class="c" style="font-size:21px;font-weight:bold;fill:#8eb2da">R</text>
</g>
<rect x="1069.500" y="244.500" width="20" height="21" fill="none" stroke="#f2d74a" stroke-width="1.500"/>
<rect x="1072" y="247" width="15" height="16" fill="#5d5d5d"/><path d="M1082 247v16M1082 252h5M1072 254h10" stroke="#454545"/>
<g fill="#e6e6e6"><rect x="1100" y="301" width="2" height="2"/><rect x="1106" y="301" width="2" height="2"/><rect x="1112" y="301" width="2" height="2"/></g>
<!-- viz tabs -->
<rect x="1025" y="326" width="19" height="17" fill="none" stroke="#fff" stroke-dasharray="2 1"/><path d="M1025 332h19M1025 337h19" stroke="#fff" stroke-dasharray="2 1"/>
<rect x="1017" y="350" width="36" height="2" fill="#d8b92e"/>
<rect x="1066.500" y="326.500" width="17" height="6" rx="1" fill="none" stroke="#fff"/><path d="M1084 329h2v5h-10v3" fill="none" stroke="#fff"/><rect x="1072.500" y="337.500" width="5" height="9" fill="none" stroke="#fff"/>
<circle cx="1114" cy="334" r="8.500" fill="none" stroke="#fff"/><path d="M1120 341l5 5" stroke="#fff" stroke-width="1.500"/><path d="M1107 336l4-3 3 2 5-4M1109 339v2M1113 338v4M1117 337v5" fill="none" stroke="#fff"/>
<!-- wells -->
<rect x="1179" y="353" width="5" height="228" rx="1" fill="#6a6a6a"/>
<text x="1017" y="371" class="wl k" textLength="36" lengthAdjust="spacingAndGlyphs">グループ</text>
<rect x="1009.500" y="380.500" width="169" height="37" rx="2" fill="none" stroke="#5a5a5a" stroke-dasharray="3 2"/>
<rect x="1012" y="385" width="164" height="22" rx="3" fill="#303030"/>
<text x="1018" y="400" style="font-size:12px;fill:#eee">地方</text>
<path d="M1147 394h8l-4 4z" fill="#777"/><path d="M1162 391l10 10M1172 391l-10 10" stroke="#777"/>
<text x="1017" y="439" class="wl">詳細</text>
<rect x="1009.500" y="448.500" width="169" height="27" rx="2" fill="none" stroke="#5a5a5a" stroke-dasharray="3 2"/>
<text x="1020" y="466" class="dr" textLength="153" lengthAdjust="spacingAndGlyphs">ここにデータ フィールドをドラッグし...</text>
<text x="1017" y="499" class="wl">値</text>
<rect x="1009.500" y="508.500" width="169" height="36" rx="2" fill="none" stroke="#5a5a5a" stroke-dasharray="3 2"/>
<rect x="1012" y="512" width="164" height="22" rx="3" fill="#303030"/>
<text x="1018" y="527" style="font-size:12px;fill:#eee">面　積</text>
<path d="M1147 521h8l-4 4z" fill="#777"/><path d="M1162 518l10 10M1172 518l-10 10" stroke="#777"/>
<text x="1017" y="566" class="wl">色の彩度</text>
<rect x="1009.500" y="575.500" width="169" height="27" rx="2" fill="none" stroke="#5a5a5a" stroke-dasharray="3 2"/>
<text x="1020" y="593" class="dr" textLength="153" lengthAdjust="spacingAndGlyphs">ここにデータ フィールドをドラッグし...</text>
<text x="1017" y="625" class="wl k" textLength="24" lengthAdjust="spacingAndGlyphs">ヒント</text>
<rect x="1009.500" y="634.500" width="169" height="27" rx="2" fill="none" stroke="#5a5a5a" stroke-dasharray="3 2"/>
<text x="1020" y="652" class="dr" textLength="153" lengthAdjust="spacingAndGlyphs">ここにデータ フィールドをドラッグし...</text>
<rect x="1005" y="666" width="180" height="36" fill="#1f1f1f"/>
<text x="1019" y="692" textLength="55" lengthAdjust="spacingAndGlyphs" style="font-size:18px;fill:#fff">フィルター</text>
<text x="1017" y="720" textLength="112" lengthAdjust="spacingAndGlyphs" class="wl">ビジュアル レベル フィルター</text>

<!-- fields pane -->
<rect x="1185" y="145" width="1" height="571" fill="#000"/>
<rect x="1186" y="145" width="180" height="571" fill="#454545"/>
<rect x="1186" y="145" width="180" height="48" fill="#1f1f1f"/>
<rect x="1186" y="193" width="180" height="47" fill="#3c3c3c"/>
<rect x="1186" y="240" width="180" height="1" fill="#111"/>
<text x="1198" y="175" textLength="54" lengthAdjust="spacingAndGlyphs" style="font-size:18px;fill:#fff">フィールド</text>
<path d="M1346 163l7 6-7 6" fill="none" stroke="#aaa" stroke-width="1.100"/>
<rect x="1196.500" y="200.500" width="160" height="29" fill="#262626" stroke="#000"/>
<circle cx="1216" cy="213" r="5" fill="none" stroke="#aaa"/><path d="M1212 217l-5 6" stroke="#aaa"/>
<text x="1232" y="220" style="font-size:13px;fill:#aaa">検索</text>
<!-- heading 1 -->
<path d="M1196 263l5-5v5z" fill="#888"/>
<rect x="1211" y="255" width="13" height="11" fill="#e6e6e6"/><path d="M1211 258.500h13M1211 262h13M1215 255v11M1219.500 255v11" stroke="#555"/>
<text x="1237" y="264" class="w" style="font-size:12px">人口</text>
<path d="M1196 404l5-5v5z" fill="#888"/>
<rect x="1211" y="396" width="13" height="11" fill="#e6e6e6"/><path d="M1211 399.500h13M1211 403h13M1215 396v11M1219.500 396v11" stroke="#555"/>
<text x="1237" y="406" class="h k" textLength="58" lengthAdjust="spacingAndGlyphs">地方マスター</text>
<path d="M1196 523l5-5v5z" fill="#888"/>
<rect x="1211" y="515" width="13" height="11" fill="#e6e6e6"/><path d="M1211 518.500h13M1211 522h13M1215 515v11M1219.500 515v11" stroke="#555"/>
<text x="1237" y="524" class="h" style="font-size:12px">面積</text>
<!-- rows -->
<g fill="#666">
<rect x="1191" y="276" width="168" height="20" rx="3"/><rect x="1191" y="298" width="168" height="20" rx="3"/><rect x="1191" y="320" width="168" height="20" rx="3"/><rect x="1191" y="342" width="168" height="20" rx="3"/><rect x="1191" y="364" width="168" height="20" rx="3"/>
<rect x="1191" y="417" width="168" height="20" rx="3"/><rect x="1191" y="439" width="168" height="20" rx="3"/><rect x="1191" y="461" width="168" height="20" rx="3"/><rect x="1191" y="483" width="168" height="20" rx="3"/>
<rect x="1191" y="536" width="168" height="20" rx="3"/><rect x="1191" y="558" width="168" height="20" rx="3"/>
</g>
<g fill="#fff" stroke="#c4c4c4" stroke-width="2">
<rect x="1218" y="281" width="10" height="10"/><rect x="1218" y="303" width="10" height="10"/><rect x="1218" y="325" width="10" height="10"/><rect x="1218" y="347" width="10" height="10"/><rect x="1218" y="369" width="10" height="10"/>
<rect x="1218" y="422" width="10" height="10"/><rect x="1218" y="466" width="10" height="10"/><rect x="1218" y="488" width="10" height="10"/><rect x="1218" y="541" width="10" height="10"/>
</g>
<rect x="1217" y="443" width="12" height="12" fill="#f2c811"/><path d="M1219.500 449l2.500 2.500 5-5" fill="none" stroke="#5a3a10" stroke-width="1.500"/>
<rect x="1217" y="562" width="12" height="12" fill="#f2c811"/><path d="M1219.500 568l2.500 2.500 5-5" fill="none" stroke="#5a3a10" stroke-width="1.500"/>
<g>
<text x="1233" y="291" style="font-size:12px;fill:#999">Σ</text><text x="1233" y="313" style="font-size:12px;fill:#999">Σ</text><text x="1233" y="357" style="font-size:12px;fill:#999">Σ</text><text x="1233" y="432" style="font-size:12px;fill:#999">Σ</text><text x="1233" y="573" style="font-size:12px;fill:#999">Σ</text>
</g>
<rect x="1232" y="369" width="11" height="10" fill="#bbb"/><rect x="1236" y="372" width="6" height="6" fill="#555"/>
<text x="1250" y="291" class="f">人　口</text><text x="1250" y="313" class="f">人口密度</text><text x="1250" y="335" class="f">都道府県</text><text x="1250" y="357" class="f">面積</text><text x="1250" y="379" class="f">列</text>
<text x="1250" y="432" class="f" textLength="62" lengthAdjust="spacingAndGlyphs" style="font-size:13px">データ取得順</text><text x="1250" y="454" class="f">地方</text><text x="1250" y="476" class="f">都道府県</text><text x="1250" y="498" class="f">島嶼</text>
<text x="1250" y="551" class="f">都道府県_2</text><text x="1250" y="573" class="f">面　積</text>

<!-- status / taskbar -->
<rect x="0" y="716" width="1366" height="22" fill="#2f2f2f"/>
<text x="5" y="731" class="w k" textLength="98" lengthAdjust="spacingAndGlyphs">2 ページ中 2 ページ</text>
<rect x="0" y="738" width="1366" height="8" fill="#050505"/>
<rect x="262" y="738" width="35" height="8" fill="#2b2b2b"/><rect x="271" y="744" width="17" height="2" fill="#e8c22e"/>
<rect x="197" y="744" width="12" height="2" fill="#ccc"/><rect x="1325" y="744" width="12" height="2" fill="#eee"/><rect x="1361" y="738" width="1" height="8" fill="#666"/>
</svg>
</body></html>
